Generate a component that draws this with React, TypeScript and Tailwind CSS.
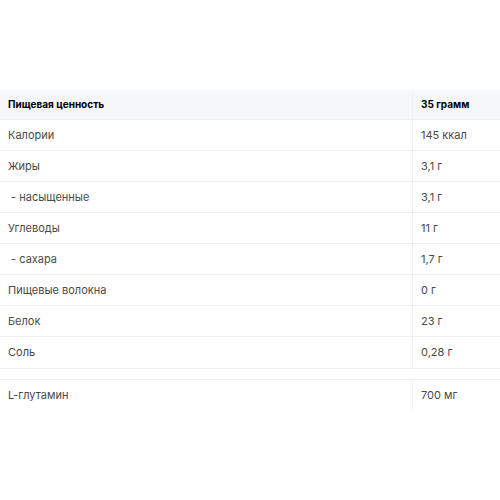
const rows: [string, string][] = [
  ["Калории", "145 ккал"],
  ["Жиры", "3,1 г"],
  ["\u00a0- насыщенные", "3,1 г"],
  ["Углеводы", "11 г"],
  ["\u00a0- сахара", "1,7 г"],
  ["Пищевые волокна", "0 г"],
  ["Белок", "23 г"],
  ["Соль", "0,28 г"],
];

const Row = ({ label, value, last }: { label: string; value: string; last?: boolean }) => (
  <div className={`grid grid-cols-[413px_1fr] h-[31px] ${last ? "" : "border-b border-[#eef0f2]"}`}>
    <div className="flex items-center px-2 text-[#4a4a4a] border-r border-[#eef0f2]">{label}</div>
    <div className="flex items-center px-2 text-[#4a4a4a]">{value}</div>
  </div>
);

export default function App() {
  return (
    <div className="min-h-[500px] bg-white pt-[90px] text-[11px] font-['Inter',sans-serif]">
      <div className="border-b border-[#eef0f2]">
        <div className="grid grid-cols-[413px_1fr] h-[30px] bg-[#f6f7f8] border-b border-[#eef0f2]">
          <div className="flex items-center px-2 text-[10px] font-bold text-black border-r border-[#eef0f2]">Пищевая ценность</div>
          <div className="flex items-center px-2 text-[10px] font-bold text-black">35 грамм</div>
        </div>
        {rows.map(([l, v], i) => (
          <Row key={l} label={l} value={v} last={i === rows.length - 1} />
        ))}
      </div>
      <div className="mt-[10px] border-t border-[#eef0f2]">
        <Row label="L-глутамин" value="700 мг" last />
      </div>
    </div>
  );
}
